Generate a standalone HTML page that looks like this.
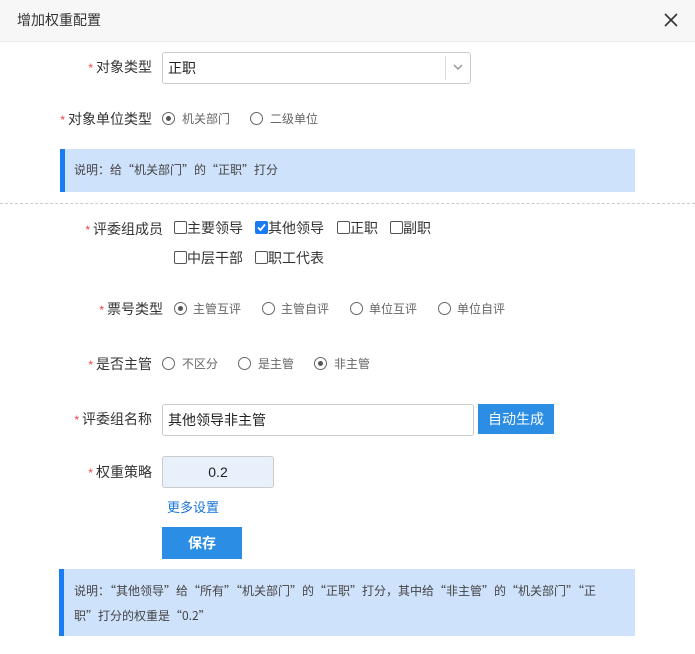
<!DOCTYPE html><html><head><meta charset="utf-8"><style>
body{margin:0;width:695px;height:654px;background:#fff;font-family:"Liberation Sans","Noto Sans CJK SC",sans-serif;position:relative;overflow:hidden;color:#333}
.a{position:absolute;white-space:nowrap}
.hd{position:absolute;left:0;top:0;width:695px;height:41px;background:#f7f7f7;border-bottom:1px solid #e8e8e8}
.lb{position:absolute;font-size:14px;color:#333;text-align:right;line-height:20px}
.lb i{color:#f04040;font-style:normal;font-size:12px;margin-right:3px}
.r{position:absolute;width:11px;height:11px;border:1.5px solid #666;border-radius:50%}
.r.on::after{content:"";position:absolute;left:3px;top:3px;width:5px;height:5px;border-radius:50%;background:#555}
.rt{position:absolute;font-size:12px;color:#666;line-height:16px}
.cb{position:absolute;width:11px;height:11px;border:1px solid #555;border-radius:2px;background:#fff}
.ct{position:absolute;font-size:14px;color:#333;line-height:18px}
.info{position:absolute;background:#cfe2fb;border-left:5px solid #1a7cf0;font-size:12px;color:#444;font-family:"Noto Sans CJK SC","Liberation Sans",sans-serif}
</style></head><body>
<div class="hd"></div>
<div class="a" style="left:17px;top:10px;font-size:14px;line-height:20px">增加权重配置</div>
<svg class="a" style="left:664px;top:13px" width="14" height="14"><path d="M1 1L13 13M13 1L1 13" stroke="#333" stroke-width="1.6"/></svg>

<div class="lb" style="right:543px;top:57px"><i>*</i>对象类型</div>
<div class="a" style="left:162px;top:52px;width:307px;height:30px;border:1px solid #ccc;border-radius:3px"></div>
<div class="a" style="left:445px;top:56px;width:1px;height:24px;background:#ddd"></div>
<svg class="a" style="left:453px;top:64px" width="10" height="7"><path d="M1 1L5 5L9 1" stroke="#999" stroke-width="1.5" fill="none"/></svg>
<div class="a" style="left:168px;top:58px;font-size:14px;line-height:20px;color:#222">正职</div>

<div class="lb" style="right:543px;top:109px"><i>*</i>对象单位类型</div>
<div class="r on" style="left:162px;top:112px"></div><div class="rt" style="left:182px;top:111px">机关部门</div>
<div class="r" style="left:250px;top:112px"></div><div class="rt" style="left:270px;top:111px">二级单位</div>

<div class="info" style="left:60px;top:149px;width:570px;height:43px"><div class="a" style="left:9px;top:12px;line-height:18px">说明：给“机关部门”的“正职”打分</div></div>
<div class="a" style="left:0;top:203px;width:695px;border-top:1px dashed #ccc"></div>

<div class="lb" style="right:532px;top:219px"><i>*</i>评委组成员</div>
<div class="cb" style="left:174px;top:221px"></div><div class="ct" style="left:187px;top:219px">主要领导</div>
<div class="cb" style="left:255px;top:221px;background:#1a7cf0;border-color:#1a7cf0"><svg width="11" height="11" style="position:absolute;left:0;top:0"><path d="M2 5.5L4.5 8L9 2.5" stroke="#fff" stroke-width="1.8" fill="none"/></svg></div><div class="ct" style="left:268px;top:219px">其他领导</div>
<div class="cb" style="left:337px;top:221px"></div><div class="ct" style="left:350px;top:219px">正职</div>
<div class="cb" style="left:390px;top:221px"></div><div class="ct" style="left:403px;top:219px">副职</div>
<div class="cb" style="left:174px;top:251px"></div><div class="ct" style="left:187px;top:249px">中层干部</div>
<div class="cb" style="left:255px;top:251px"></div><div class="ct" style="left:268px;top:249px">职工代表</div>

<div class="lb" style="right:532px;top:299px"><i>*</i>票号类型</div>
<div class="r on" style="left:174px;top:302px"></div><div class="rt" style="left:193px;top:301px">主管互评</div>
<div class="r" style="left:262px;top:302px"></div><div class="rt" style="left:281px;top:301px">主管自评</div>
<div class="r" style="left:350px;top:302px"></div><div class="rt" style="left:369px;top:301px">单位互评</div>
<div class="r" style="left:438px;top:302px"></div><div class="rt" style="left:457px;top:301px">单位自评</div>

<div class="lb" style="right:543px;top:354px"><i>*</i>是否主管</div>
<div class="r" style="left:162px;top:357px"></div><div class="rt" style="left:182px;top:356px">不区分</div>
<div class="r" style="left:238px;top:357px"></div><div class="rt" style="left:258px;top:356px">是主管</div>
<div class="r on" style="left:314px;top:357px"></div><div class="rt" style="left:334px;top:356px">非主管</div>

<div class="lb" style="right:543px;top:409px"><i>*</i>评委组名称</div>
<div class="a" style="left:162px;top:404px;width:310px;height:30px;border:1px solid #ccc;border-radius:3px"></div>
<div class="a" style="left:168px;top:410px;font-size:14px;line-height:20px;color:#222">其他领导非主管</div>
<div class="a" style="left:478px;top:404px;width:76px;height:30px;background:#2b8de3;color:#fff;font-size:14px;line-height:30px;text-align:center">自动生成</div>

<div class="lb" style="right:543px;top:462px"><i>*</i>权重策略</div>
<div class="a" style="left:162px;top:456px;width:110px;height:30px;border:1px solid #ccc;border-radius:3px;background:#e8f0fc;text-align:center;line-height:30px;font-size:14px;color:#222">0.2</div>
<div class="a" style="left:167px;top:499px;font-size:13px;line-height:18px;color:#1a73d8">更多设置</div>
<div class="a" style="left:162px;top:527px;width:80px;height:32px;background:#2b8de3;color:#fff;font-size:14px;font-weight:bold;line-height:32px;text-align:center">保存</div>

<div class="info" style="left:59px;top:569px;width:571px;height:67px">
<div class="a" style="left:10px;top:13px;line-height:18px">说明：“其他领导”给“所有”“机关部门”的“正职”打分，其中给“非主管”的“机关部门”“正</div>
<div class="a" style="left:10px;top:38px;line-height:18px">职”打分的权重是“0.2”</div></div>
</body></html>
